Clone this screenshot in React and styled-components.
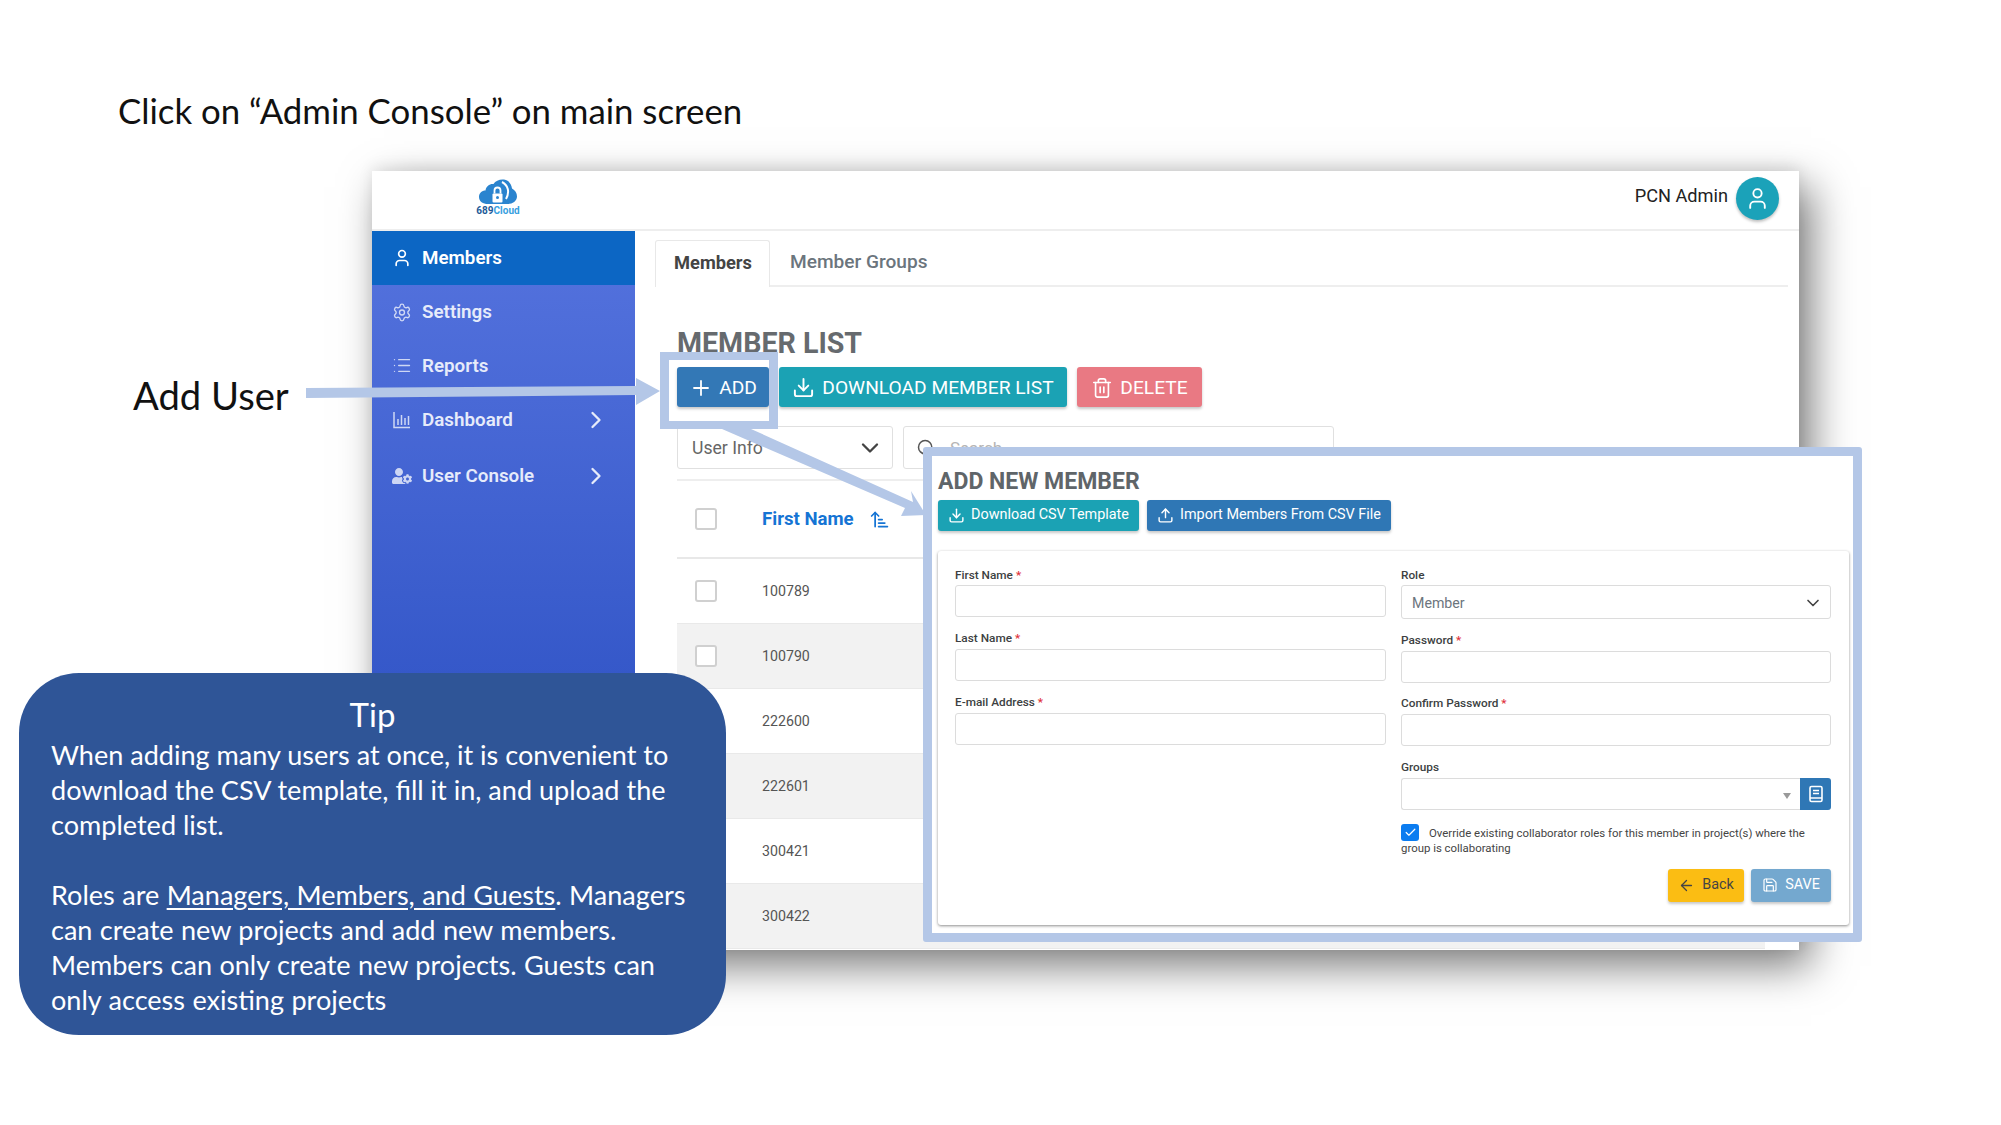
import React from "react";
import styled, { createGlobalStyle } from "styled-components";
import {
  User, Settings, List, ChevronRight, ChevronDown, Plus, Download, Upload,
  Trash2, Search, ArrowUpNarrowWide, ArrowLeft, Save, Check,
} from "lucide-react";
import { FaUserCog } from "react-icons/fa";

const UI = `Roboto, "Liberation Sans", sans-serif`;
const SLIDE = `Lato, "Open Sans", sans-serif`;

const Global = createGlobalStyle`
  html, body { margin: 0; padding: 0; background: #fff; }
  * { box-sizing: border-box; }
`;

const Slide = styled.div`
  position: relative;
  width: 2001px;
  height: 1125px;
  overflow: hidden;
  background: #fff;
  padding: 91px 0 0 372px;
`;

const Heading = styled.h1`
  margin: 0 0 0 -254px;
  height: 40px;
  font: 400 34.8px/40px ${SLIDE};
  color: #111;
  white-space: nowrap;
`;

const Callout = styled.div`
  position: absolute;
  left: 133px;
  top: 373px;
  font: 400 38.2px/44px ${SLIDE};
  color: #111;
`;

const Window = styled.div`
  width: 1427px;
  height: 779px;
  margin-top: 40px;
  background: #fff;
  display: flex;
  flex-direction: column;
  box-shadow: 12px 16px 40px rgba(0, 0, 0, 0.52), 0 -4px 14px rgba(0, 0, 0, 0.08);
`;

const TopBar = styled.header`
  flex: 0 0 60px;
  display: flex;
  align-items: center;
  justify-content: space-between;
  padding: 0 20px 0 104px;
  border-bottom: 2px solid #eeeeee;
`;

const Logo = styled.div`
  display: flex;
  flex-direction: column;
  align-items: center;
  width: 44px;
  margin-top: -5px;
`;

const LogoText = styled.span`
  font: 700 10px/10px ${UI};
  color: #37a0e0;
  white-space: nowrap;
`;

const LogoDigits = styled.span`
  color: #1c5a98;
`;

const UserBox = styled.div`
  display: flex;
  align-items: center;
  gap: 8px;
  margin-top: -4px;
  font: 400 18.2px/22px ${UI};
  color: #222;
`;

const UserName = styled.span`
  margin-top: -4px;
`;

const Avatar = styled.div`
  width: 43px;
  height: 43px;
  border-radius: 50%;
  background: #1ba2b9;
  color: #fff;
  display: flex;
  align-items: center;
  justify-content: center;
  box-shadow: 0 2px 3px rgba(0, 0, 0, 0.25);
`;

const Body = styled.div`
  flex: 1;
  display: flex;
  min-height: 0;
  overflow: hidden;
`;

const Sidebar = styled.nav`
  flex: 0 0 263px;
  background: linear-gradient(180deg, #5573de 0%, #3558c9 62%, #3558c9 100%);
`;

const NavItem = styled.div`
  height: ${(p) => p.$h}px;
  display: flex;
  align-items: center;
  padding: 0 25px 0 20px;
  gap: 10px;
  background: ${(p) => (p.$active ? "#0c66c4" : "transparent")};
  color: ${(p) => (p.$active ? "#fff" : "#e6ebfa")};
  font: 600 18.8px/20px ${UI};
`;

const NavIcon = styled.span`
  width: 20px;
  display: flex;
  justify-content: center;
  color: inherit;
  opacity: ${(p) => (p.$active ? 1 : 0.85)};
`;

const NavLabel = styled.span`
  flex: 1;
`;

const Content = styled.main`
  flex: 1;
  min-width: 0;
  padding: 9px 11px 0 20px;
`;

const Tabs = styled.div`
  display: flex;
  height: 47px;
  border-bottom: 2px solid #eeeeee;
`;

const Tab = styled.div`
  width: ${(p) => (p.$active ? "115px" : "auto")};
  height: ${(p) => (p.$active ? "47px" : "44px")};
  padding: ${(p) => (p.$active ? "0 0 2px 18px" : "0 0 0 20px")};
  display: flex;
  align-items: center;
  font: ${(p) => (p.$active ? 700 : 500)} ${(p) => (p.$active ? 18.3 : 19.1)}px/20px ${UI};
  color: ${(p) => (p.$active ? "#444" : "#6b757d")};
  background: ${(p) => (p.$active ? "#fff" : "transparent")};
  border: ${(p) => (p.$active ? "1px solid #e8e8e8" : "none")};
  border-bottom: none;
  border-radius: 3px 3px 0 0;
`;

const Main = styled.section`
  padding: 41px 23px 0 22px;
`;

const PageTitle = styled.h2`
  margin: 0;
  font: 700 28.6px/30px ${UI};
  color: #666a6e;
`;

const Toolbar = styled.div`
  display: flex;
  gap: 10px;
  margin-top: 9px;
`;

const Button = styled.button`
  height: ${(p) => p.$h || 40}px;
  width: ${(p) => p.$w}px;
  padding: ${(p) => (p.$h ? "0" : "1px 0 0")};
  border: none;
  border-radius: 3px;
  background: ${(p) => p.$bg};
  color: #fff;
  font: 400 ${(p) => p.$fs || 19.2}px/1 ${UI};
  display: inline-flex;
  align-items: center;
  justify-content: center;
  gap: ${(p) => p.$gap || 8}px;
  box-shadow: 0 2px 3px rgba(0, 0, 0, 0.22);
  white-space: nowrap;
`;

const FilterRow = styled.div`
  display: flex;
  gap: 10px;
  margin-top: 19px;
  height: 43px;
`;

const FilterSelect = styled.div`
  width: 216px;
  border: 1px solid #e0e0e0;
  border-radius: 3px;
  display: flex;
  align-items: center;
  justify-content: space-between;
  padding: 0 8px 0 14px;
  font: 400 17.6px/20px ${UI};
  color: #666;
`;

const SearchBox = styled.div`
  width: 431px;
  border: 1px solid #e0e0e0;
  border-radius: 3px;
  display: flex;
  align-items: center;
  gap: 14px;
  padding: 0 12px;
  font: 400 17px/20px ${UI};
  color: #b5b5b5;
`;

const Table = styled.div`
  margin-top: 10px;
  border-top: 2px solid #eeeeee;
`;

const HeadRow = styled.div`
  height: 78px;
  display: flex;
  align-items: center;
  border-bottom: 2px solid #e8e8e8;
  padding-left: 18px;
  gap: 45px;
`;

const HeadCell = styled.div`
  display: flex;
  align-items: center;
  gap: 15px;
  font: 700 18.6px/20px ${UI};
  color: #1574d4;
`;

const Row = styled.div`
  height: 65px;
  display: flex;
  align-items: center;
  padding-left: 18px;
  gap: 45px;
  background: ${(p) => (p.$alt ? "#f2f2f2" : "#fff")};
  border-bottom: 1px solid #e9e9e9;
  font: 400 14.2px/18px ${UI};
  color: #555;
`;

const RowBox = styled.span`
  width: 22px;
  height: 22px;
  background: #fff;
  border: 2px solid #d0d0d0;
  border-radius: 3px;
  flex: none;
`;

const RowSpacer = styled.span`
  width: 22px;
  flex: none;
`;

const Frame = styled.div`
  position: absolute;
  left: 660px;
  top: 352px;
  width: 118px;
  height: 77px;
  border: solid #b4c7e7;
  border-width: 8px 9px;
`;

const Arrows = styled.svg`
  position: absolute;
  inset: 0;
  width: 2001px;
  height: 1125px;
  pointer-events: none;
`;

const Modal = styled.div`
  position: absolute;
  left: 923px;
  top: 447px;
  width: 939px;
  height: 495px;
  background: #fff;
  border: 9px solid #b4c7e7;
  border-radius: 3px;
  padding: 14px 4px 0 6px;
`;

const ModalTitle = styled.h3`
  margin: 0;
  font: 700 23px/24px ${UI};
  color: #5f6569;
  white-space: nowrap;
`;

const ModalActions = styled.div`
  display: flex;
  gap: 8px;
  margin-top: 6px;
`;

const Card = styled.div`
  margin-top: 20px;
  height: 374px;
  background: #fff;
  border-radius: 3px;
  box-shadow: 0 1px 3px rgba(0, 0, 0, 0.45);
  padding: 18px 18px 0 17px;
  display: grid;
  grid-template-columns: 431px 430px;
  column-gap: 15px;
  align-items: start;
`;

const Col = styled.div`
  display: flex;
  flex-direction: column;
  gap: ${(p) => p.$gap}px;
`;

const Label = styled.label`
  height: 16px;
  font: 500 11.8px/13px ${UI};
  color: #3c3f42;
  white-space: nowrap;
`;

const Field = styled.div`
  display: flex;
  flex-direction: column;
  & + & ${Label} {
    height: 17px;
    margin-top: -1px;
  }
`;

const Req = styled.span`
  color: #e0303a;
`;

const Input = styled.div`
  height: ${(p) => p.$h || 32}px;
  border: 1px solid #dcdcdc;
  border-radius: 3px;
  background: #fff;
  display: flex;
  align-items: center;
  justify-content: space-between;
  padding: 1px 7px 0 10px;
  font: 400 14.2px/18px ${UI};
  color: #6c757d;
`;

const GroupRow = styled.div`
  display: flex;
  height: 32px;
`;

const GroupInput = styled.div`
  flex: 1;
  border: 1px solid #dcdcdc;
  border-right: none;
  border-radius: 3px 0 0 3px;
  position: relative;
  &::after {
    content: "";
    position: absolute;
    right: 9px;
    top: 14px;
    border: 4px solid transparent;
    border-top: 6px solid #9a9a9a;
    border-bottom: none;
  }
`;

const GroupButton = styled.div`
  width: 31px;
  background: #2f77b5;
  border-radius: 0 3px 3px 0;
  display: flex;
  align-items: center;
  justify-content: center;
`;

const Override = styled.div`
  margin-top: 14px;
  font: 400 11.4px/15px ${UI};
  color: #444;
`;

const CheckBox = styled.span`
  display: inline-flex;
  width: 18px;
  height: 17px;
  margin-right: 10px;
  vertical-align: -2px;
  background: #0b7cf0;
  border-radius: 3px;
  align-items: center;
  justify-content: center;
  color: #fff;
`;

const FormActions = styled.div`
  display: flex;
  justify-content: flex-end;
  gap: 7px;
  margin-top: 13px;
`;

const BackLabel = styled.span`
  color: #444;
`;

const Tip = styled.aside`
  position: absolute;
  left: 19px;
  top: 673px;
  width: 707px;
  height: 362px;
  background: #2f5597;
  border-radius: 60px;
  padding: 22px 30px 0 32px;
  color: #fff;
  font: 400 27.05px/35px ${SLIDE};
`;

const TipTitle = styled.div`
  text-align: center;
  font-size: 33px;
  line-height: 38px;
  margin-right: 2px;
  margin-bottom: 4px;
`;

const TipPara = styled.p`
  margin: 0 0 35px;
  white-space: nowrap;
  word-spacing: ${(p) => p.$ws || 0}px;
`;

const Under = styled.span`
  text-decoration: underline;
  text-underline-offset: 3px;
`;

const DashIcon = () => (
  <svg width="20" height="20" viewBox="0 0 20 20" fill="none" stroke="currentColor" strokeWidth="1.5">
    <path d="M2 2v15.500h16" />
    <path d="M6 15V9M9.500 15V5M13 15V8M16.500 15V6" />
  </svg>
);

const CloudLogo = () => (
  <svg width="38" height="27" viewBox="0 0 38 27">
    <path
      d="M9 25C4 25 0 22.500 0 18 0 14 3 11.500 6.500 11.500 7 7 11 4.500 14.500 5 16.500 1.500 21 0 25 0.500 30 1.500 32.500 5 33 9.500 36 11 38 14 38 17.500 38 22 33.500 25 29 25Z"
      fill="#2a84cf"
    />
    <path d="M23 3C29 6 31 13 27 20" fill="none" stroke="#fff" strokeWidth="2" />
    <rect x="13.500" y="14.500" width="10" height="9" rx="1" fill="#fff" />
    <path d="M15.500 14.500v-3a3 3 0 0 1 6 0v3" fill="none" stroke="#fff" strokeWidth="1.800" />
    <circle cx="18.500" cy="18.500" r="1.500" fill="#2a84cf" />
  </svg>
);

const ListBookIcon = () => (
  <svg width="16" height="18" viewBox="0 0 16 18" fill="none" stroke="#fff" strokeWidth="1.6">
    <rect x="2" y="1.500" width="12" height="15" rx="1.500" />
    <path d="M5 5.500h6M5 8.500h6M2 13h12" />
  </svg>
);

const rows = ["100789", "100790", "222600", "222601", "300421", "300422"];

export default function App() {
  return (
    <>
      <Global />
      <Slide>
        <Heading>Click on “Admin Console” on main screen</Heading>
        <Window>
          <TopBar>
            <Logo>
              <CloudLogo />
              <LogoText><LogoDigits>689</LogoDigits>Cloud</LogoText>
            </Logo>
            <UserBox>
              <UserName>PCN Admin</UserName>
              <Avatar>
                <User size={25} strokeWidth={1.8} />
              </Avatar>
            </UserBox>
          </TopBar>
          <Body>
            <Sidebar>
              <NavItem $active $h={54}>
                <NavIcon $active><User size={26} strokeWidth={2} /></NavIcon>
                <NavLabel>Members</NavLabel>
              </NavItem>
              <NavItem $h={54}>
                <NavIcon><Settings size={23} strokeWidth={1.6} /></NavIcon>
                <NavLabel>Settings</NavLabel>
              </NavItem>
              <NavItem $h={53.5}>
                <NavIcon><List size={25} strokeWidth={1.6} /></NavIcon>
                <NavLabel>Reports</NavLabel>
              </NavItem>
              <NavItem $h={55.5}>
                <NavIcon><DashIcon /></NavIcon>
                <NavLabel>Dashboard</NavLabel>
                <ChevronRight size={28} strokeWidth={2} />
              </NavItem>
              <NavItem $h={56}>
                <NavIcon><FaUserCog size={24} /></NavIcon>
                <NavLabel>User Console</NavLabel>
                <ChevronRight size={28} strokeWidth={2} />
              </NavItem>
            </Sidebar>
            <Content>
              <Tabs>
                <Tab $active>Members</Tab>
                <Tab>Member Groups</Tab>
              </Tabs>
              <Main>
                <PageTitle>MEMBER LIST</PageTitle>
                <Toolbar>
                  <Button $bg="#3378b6" $w={92} $gap={6}>
                    <Plus size={24} strokeWidth={1.8} />ADD
                  </Button>
                  <Button $bg="#1ba2b4" $w={288} $gap={7}>
                    <Download size={23} strokeWidth={2} />DOWNLOAD MEMBER LIST
                  </Button>
                  <Button $bg="#e97983" $w={125} $gap={7}>
                    <Trash2 size={22} strokeWidth={1.8} />DELETE
                  </Button>
                </Toolbar>
                <FilterRow>
                  <FilterSelect>
                    User Info
                    <ChevronDown size={28} strokeWidth={2} color="#444" />
                  </FilterSelect>
                  <SearchBox>
                    <Search size={20} strokeWidth={1.8} color="#555" />
                    Search
                  </SearchBox>
                </FilterRow>
                <Table>
                  <HeadRow>
                    <RowBox />
                    <HeadCell>
                      First Name
                      <ArrowUpNarrowWide size={21} strokeWidth={2} />
                    </HeadCell>
                  </HeadRow>
                  {rows.map((r, i) => (
                    <Row key={r} $alt={i % 2 === 1}>
                      {i < 2 ? <RowBox /> : <RowSpacer />}
                      {r}
                    </Row>
                  ))}
                </Table>
              </Main>
            </Content>
          </Body>
        </Window>

        <Callout>Add User</Callout>

        <Arrows viewBox="0 0 2001 1125">
          <polygon
            fill="#b4c7e7"
            points="306,388 636,386 636,378 660,391 636,405 636,395 306,398"
          />
          <polygon
            fill="#b4c7e7"
            points="722,429 751,429 913,502 911,491 926,515 901,516 905,508"
          />
        </Arrows>
        <Frame />

        <Modal>
          <ModalTitle>ADD NEW MEMBER</ModalTitle>
          <ModalActions>
            <Button $bg="#1ba2b4" $w={201} $h={31} $fs={14.4} $gap={6}>
              <Download size={17} strokeWidth={2} />Download CSV Template
            </Button>
            <Button $bg="#2f77b5" $w={244} $h={31} $fs={14.4} $gap={6}>
              <Upload size={17} strokeWidth={2} />Import Members From CSV File
            </Button>
          </ModalActions>
          <Card>
            <Col $gap={16}>
              <Field>
                <Label>First Name <Req>*</Req></Label>
                <Input />
              </Field>
              <Field>
                <Label>Last Name <Req>*</Req></Label>
                <Input />
              </Field>
              <Field>
                <Label>E-mail Address <Req>*</Req></Label>
                <Input />
              </Field>
            </Col>
            <Col $gap={15.5}>
              <Field>
                <Label>Role</Label>
                <Input $h={34}>
                  Member
                  <ChevronDown size={20} strokeWidth={2} color="#444" />
                </Input>
              </Field>
              <Field>
                <Label>Password <Req>*</Req></Label>
                <Input />
              </Field>
              <Field>
                <Label>Confirm Password <Req>*</Req></Label>
                <Input />
              </Field>
              <Field>
                <Label>Groups</Label>
                <GroupRow>
                  <GroupInput />
                  <GroupButton><ListBookIcon /></GroupButton>
                </GroupRow>
                <Override>
                  <CheckBox><Check size={13} strokeWidth={2.2} /></CheckBox>
                  Override existing collaborator roles for this member in project(s) where the group is collaborating
                </Override>
                <FormActions>
                  <Button $bg="#fbbd13" $w={76} $h={33} $fs={14.4} $gap={7}>
                    <ArrowLeft size={17} strokeWidth={1.8} color="#444" />
                    <BackLabel>Back</BackLabel>
                  </Button>
                  <Button $bg="#74a8cf" $w={80} $h={33} $fs={14.4} $gap={7}>
                    <Save size={16} strokeWidth={1.8} />SAVE
                  </Button>
                </FormActions>
              </Field>
            </Col>
          </Card>
        </Modal>

        <Tip>
          <TipTitle>Tip</TipTitle>
          <TipPara>
            When adding many users at once, it is convenient to<br />
            download the CSV template, fill it in, and upload the<br />
            completed list.
          </TipPara>
          <TipPara $ws={0.5}>
            Roles are <Under>Managers, Members, and Guests</Under>. Managers<br />
            can create new projects and add new members.<br />
            Members can only create new projects. Guests can<br />
            only access existing projects
          </TipPara>
        </Tip>
      </Slide>
    </>
  );
}
